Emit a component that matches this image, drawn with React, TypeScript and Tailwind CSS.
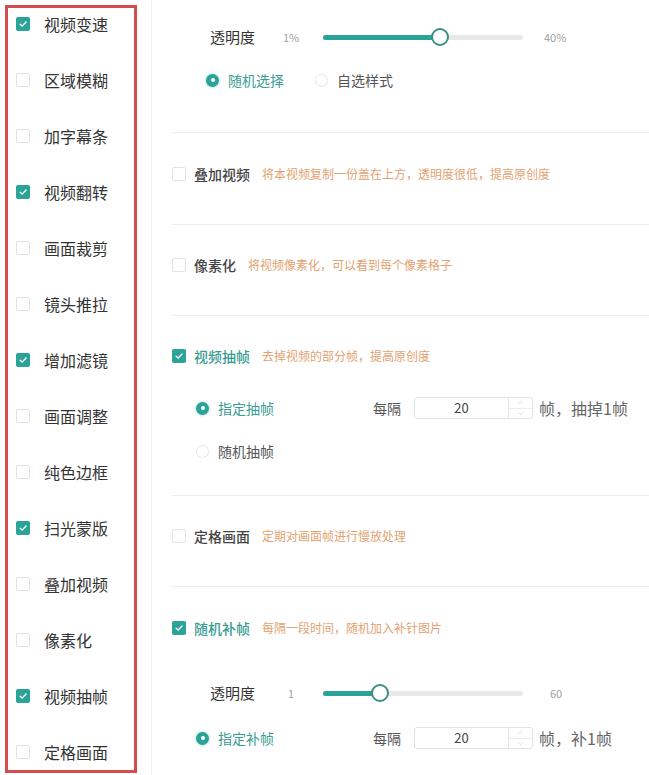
import { ChevronDown, ChevronUp } from 'lucide-react'

const FONT = { fontFamily: '"Noto Sans CJK SC", "Noto Sans", sans-serif' }

const sideItems: { label: string; checked: boolean }[] = [
  { label: '视频变速', checked: true },
  { label: '区域模糊', checked: false },
  { label: '加字幕条', checked: false },
  { label: '视频翻转', checked: true },
  { label: '画面裁剪', checked: false },
  { label: '镜头推拉', checked: false },
  { label: '增加滤镜', checked: true },
  { label: '画面调整', checked: false },
  { label: '纯色边框', checked: false },
  { label: '扫光蒙版', checked: true },
  { label: '叠加视频', checked: false },
  { label: '像素化', checked: false },
  { label: '视频抽帧', checked: true },
  { label: '定格画面', checked: false },
]

function Checkbox({ checked }: { checked: boolean }) {
  if (checked) {
    return (
      <span className="flex h-[14px] w-[14px] shrink-0 items-center justify-center rounded-[2px] bg-[#2ba398]">
        <svg viewBox="0 0 12 12" className="h-[10px] w-[10px]" fill="none" stroke="white" strokeWidth="1.6" strokeLinecap="round" strokeLinejoin="round">
          <path d="M2.5 6.2 5 8.5 9.6 3.6" />
        </svg>
      </span>
    )
  }
  return <span className="block h-[14px] w-[14px] shrink-0 rounded-[2px] border border-[#e2e2e2] bg-white" />
}

function Radio({ checked }: { checked: boolean }) {
  if (checked) {
    return (
      <span className="flex h-[13px] w-[13px] shrink-0 items-center justify-center rounded-full bg-[#2ba398] shadow-[0_0_3px_rgba(43,163,152,0.5)]">
        <span className="block h-[4px] w-[4px] rounded-full bg-white" />
      </span>
    )
  }
  return <span className="block h-[13px] w-[13px] shrink-0 rounded-full border border-[#e6e6e6] bg-white" />
}

function Slider({ min, max, pct, minPad, maxGap }: { min: string; max: string; pct: number; minPad: number; maxGap: number }) {
  return (
    <div className="flex h-5 items-center pl-[38px]">
      <span className="w-[73px] text-[15px] text-[#333]">透明度</span>
      <span className="w-[40px] text-[11px] text-[#a0a0a0]" style={{ paddingLeft: minPad }}>
        {min}
      </span>
      <div className="relative h-[5px] w-[200px] rounded-full bg-[#e9e9e9]">
        <div className="absolute inset-y-0 left-0 rounded-full bg-[#2ba398]" style={{ width: `${pct}%` }} />
        <span
          className="absolute top-1/2 h-[18px] w-[18px] -translate-x-1/2 -translate-y-1/2 rounded-full border-2 border-[#3d8f86] bg-white"
          style={{ left: `${pct}%` }}
        />
      </div>
      <span className="text-[11px] text-[#a0a0a0]" style={{ marginLeft: maxGap }}>
        {max}
      </span>
    </div>
  )
}

function OptionRow({ label, desc, checked, descGap = 12 }: { label: string; desc: string; checked: boolean; descGap?: number }) {
  return (
    <div className="flex h-5 items-center">
      <Checkbox checked={checked} />
      <span className={`ml-[8px] text-[14px] font-medium ${checked ? 'text-[#3a9d94]' : 'text-[#444]'}`}>{label}</span>
      <span className="text-[12px] text-[#e3a272]" style={{ marginLeft: descGap }}>
        {desc}
      </span>
    </div>
  )
}

function Stepper({ value }: { value: string }) {
  return (
    <div className="flex h-[22px] w-[119px] items-stretch rounded-[3px] border border-[#e2e2e2] bg-white">
      <div className="flex flex-1 items-center justify-center text-[13px] text-[#444]">{value}</div>
      <div className="flex w-[24px] flex-col border-l border-[#e6e6e6]">
        <span className="flex flex-1 items-center justify-center border-b border-[#eee] text-[#c4c4c4]">
          <ChevronUp className="h-[9px] w-[9px]" strokeWidth={1.5} />
        </span>
        <span className="flex flex-1 items-center justify-center text-[#c4c4c4]">
          <ChevronDown className="h-[9px] w-[9px]" strokeWidth={1.5} />
        </span>
      </div>
    </div>
  )
}

function FrameRow({ label, tail, checked }: { label: string; tail?: string; checked: boolean }) {
  return (
    <div className="flex h-[22px] items-center pl-[24px]">
      <Radio checked={checked} />
      <span className={`ml-[9px] w-[155px] text-[14px] ${checked ? 'text-[#3a9d94]' : 'text-[#555]'}`}>{label}</span>
      {tail && (
        <>
          <span className="w-[41px] text-[14px] text-[#555]">每隔</span>
          <Stepper value="20" />
          <span className="ml-[6px] text-[16px] text-[#666]">{tail}</span>
        </>
      )}
    </div>
  )
}

export default function App() {
  return (
    <div className="flex h-[775px] w-[649px] overflow-hidden bg-white" style={FONT}>
      <aside className="w-[152px] shrink-0 border-r border-[#efefef] pl-[5px] pt-[5px]">
        <div className="flex h-[768px] w-[132px] flex-col gap-[36px] border-[3px] border-[#d44c4c] pl-[8px] pt-[6px]">
          {sideItems.map((item) => (
            <div key={item.label} className="flex h-5 items-center gap-[14px]">
              <Checkbox checked={item.checked} />
              <span className="text-[16px] text-[#333]">{item.label}</span>
            </div>
          ))}
        </div>
      </aside>

      <main className="flex-1 pl-[20px]">
        <section className="pt-[27px]">
          <Slider min="1%" max="40%" pct={58.5} minPad={0} maxGap={21} />
          <div className="mt-[10px] flex h-[46px] items-center gap-[9px] pl-[34px]">
            <Radio checked />
            <span className="w-[78px] text-[14px] text-[#3a9d94]">随机选择</span>
            <Radio checked={false} />
            <span className="text-[14px] text-[#555]">自选样式</span>
          </div>
          <div className="h-[29px]" />
        </section>

        <div className="h-px bg-[#ececec]" />
        <section className="pb-[40px] pt-[31px]">
          <OptionRow label="叠加视频" desc="将本视频复制一份盖在上方，透明度很低，提高原创度" checked={false} />
        </section>

        <div className="h-px bg-[#ececec]" />
        <section className="pb-[40px] pt-[30px]">
          <OptionRow label="像素化" desc="将视频像素化，可以看到每个像素格子" checked={false} />
        </section>

        <div className="h-px bg-[#ececec]" />
        <section className="pb-[33px] pt-[30px]">
          <OptionRow label="视频抽帧" desc="去掉视频的部分帧，提高原创度" checked />
          <div className="mt-[31px]">
            <FrameRow label="指定抽帧" tail="帧，抽掉1帧" checked />
          </div>
          <div className="mt-[21px]">
            <FrameRow label="随机抽帧" checked={false} />
          </div>
        </section>

        <div className="h-px bg-[#ececec]" />
        <section className="pb-[40px] pt-[30px]">
          <OptionRow label="定格画面" desc="定期对画面帧进行慢放处理" checked={false} />
        </section>

        <div className="h-px bg-[#ececec]" />
        <section className="pt-[31px]">
          <OptionRow label="随机补帧" desc="每隔一段时间，随机加入补针图片" checked />
          <div className="mt-[45px]">
            <Slider min="1" max="60" pct={28.5} minPad={5} maxGap={27} />
          </div>
          <div className="mt-[24px]">
            <FrameRow label="指定补帧" tail="帧，补1帧" checked />
          </div>
          <div className="mt-[21px]">
            <FrameRow label="随机补帧" checked={false} />
          </div>
        </section>
      </main>
    </div>
  )
}
